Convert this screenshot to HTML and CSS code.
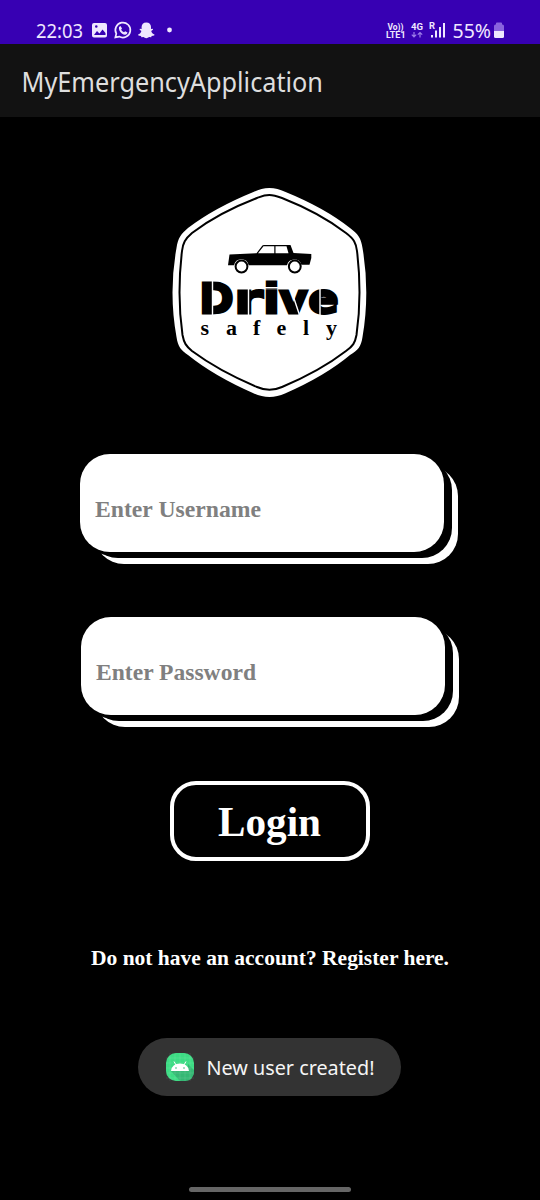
FILE: index.html
```html
<!DOCTYPE html>
<html lang="en">
<head>
<meta charset="utf-8">
<title>MyEmergencyApplication</title>
<link rel="stylesheet" href="styles.css">
</head>
<body>
<div class="screen">
  <header class="status">
    <div class="status-left">
      <svg width="140" height="24" viewBox="32 18 140 24">
        <g fill="#efe7ff">
          <text class="ui" x="36" y="37.5" font-size="20" textLength="47" lengthAdjust="spacingAndGlyphs">22:03</text>
          <path fill-rule="evenodd" d="M94 23H105Q107 23 107 25V35.500Q107 37.500 105 37.500H94Q92 37.500 92 35.500V25Q92 23 94 23ZM94 35L97 31L99.500 33.500L102.500 29.500L105.500 33V35ZM95 26.500a1.300 1.300 0 1 0 2.600 0a1.300 1.300 0 1 0-2.600 0Z"/>
          <path d="M146.300 22.400c3 0 4.700 2 4.700 4.600v2l1.700-.3.300 1-1.800 1.200c.5 1.800 1.600 2.900 3.300 3.500l-.3 1-2.600.6-.4 1.200-2.200-.1c-.9.700-1.600 1.100-2.700 1.100s-1.800-.4-2.700-1.100l-2.200.1-.4-1.200-2.600-.6-.3-1c1.700-.6 2.800-1.700 3.300-3.500l-1.800-1.200.3-1 1.700.3v-2c0-2.600 1.700-4.600 4.700-4.600Z"/>
          <circle cx="169.500" cy="30" r="2.400"/>
        </g>
        <path d="M115.400 37.300L116.300 33.700A7.500 7.500 0 1 1 119.200 36.600Z" fill="none" stroke="#efe7ff" stroke-width="1.700"/>
        <path d="M119 27l1.500-1 1.500 2.500-.9 1.200q1 1.900 2.900 2.600l1.200-1.100 2.300 1.300-.7 1.600q-2 1.400-5-.7-3.400-2.600-2.800-6.400Z" fill="#efe7ff"/>
      </svg>
    </div>
    <svg width="122" height="24" viewBox="384 18 122 24" fill="#efe7ff">
      <text class="tiny" x="387.500" y="29.500" font-size="9" textLength="16" lengthAdjust="spacingAndGlyphs">Vo))</text>
      <text class="tiny" x="386" y="38" font-size="9" textLength="19.500" lengthAdjust="spacingAndGlyphs">LTE1</text>
      <text class="tiny" x="411" y="29.500" font-size="9" textLength="12" lengthAdjust="spacingAndGlyphs">4G</text>
      <path d="M414 32V37M411.800 34.700L414 37L416.200 34.700M420 37.500V32.500M417.800 34.700L420 32.500L422.200 34.700" fill="none" stroke="#9c7ce8" stroke-width="1.200"/>
      <text class="tiny" x="429" y="29" font-size="9" textLength="6" lengthAdjust="spacingAndGlyphs">R</text>
      <path d="M431 35h2v2.500h-2zM435 30.500h2v7h-2zM439 27h2v10.500h-2zM443 23h2v14.500h-2z"/>
      <text class="ui" x="452.500" y="37.500" font-size="20" textLength="38.500" lengthAdjust="spacingAndGlyphs">55%</text>
      <path d="M494 31V26Q494 24.500 495.500 24.500H496V23Q496 22.500 497 22.500H501Q502 22.500 502 23V24.500H502.500Q504 24.500 504 26V31Z" fill="#8963de"/>
      <path d="M494 31H504V36.500Q504 38 502.500 38H495.500Q494 38 494 36.500Z"/>
    </svg>
  </header>
  <div class="appbar">
    <svg width="308" height="44" viewBox="19 60 308 44"><text class="ui" x="21.500" y="91.500" font-size="26.500" fill="#dedede" textLength="301.500" lengthAdjust="spacingAndGlyphs">MyEmergencyApplication</text></svg>
  </div>
  <main class="content">
    <svg class="logo" width="196" height="211" viewBox="171 187 196 211">
      <path fill="#fff" d="M269.300 188C275 188 280 189.500 285 191.700Q325 208 350 228C358 234 361 238 362.500 248Q366.300 270 366.300 292.500Q366.300 315 362.500 337C361 347 358 350 350 355Q325 376 285 393.500C275 398 264 398 254 393.500Q214 376 188 355C181 350 178 347 176.500 337Q172.500 315 172.500 292.500Q172.500 270 176.500 248C178 238 181 234 188 228Q214 208 254 191.700C259 189.500 264 188 269.300 188Z"/>
      <path fill="none" stroke="#000" stroke-width="2" d="M269.300 195C274 195 278 196.500 282 198Q320 213 346 233C354 239 356 243 357 251Q359.500 271 359.500 292.500Q359.500 314 356.500 335C355 343 353 346 346 351Q320 371 282 387C273 391 266 391 257 387Q219 371 192 351C186 346 184 343 182.500 335Q179.500 314 179.500 292.500Q179.500 271 182 251C183 243 185 239 192 233Q218 213 257 198C261 196.500 264 195 269.300 195Z"/>
      <path fill-rule="evenodd" d="M228 265.300L229.500 254.500L256.500 253.200L262 246Q262.500 245 264 245H290.500L293.500 253L311.300 254V258L309.500 264.800H301.500A7.500 7.500 0 0 0 287 265.300H248.700A7.500 7.500 0 0 0 234 265.300ZM258 253.200H274.300V246.300H263.500ZM275.500 253.200H288.500L286.500 246.300H275.500Z"/>
      <g fill="#fff" stroke="#000" stroke-width="2"><circle cx="241.500" cy="266.500" r="5.900"/><circle cx="294.800" cy="266.500" r="5.900"/></g>
      <text class="drive" y="312.500" font-size="40"><tspan x="199.500" textLength="34" lengthAdjust="spacingAndGlyphs">D</tspan><tspan x="234.500" textLength="28" lengthAdjust="spacingAndGlyphs">r</tspan><tspan x="263.500" textLength="16" lengthAdjust="spacingAndGlyphs">i</tspan><tspan x="279.500" textLength="28" lengthAdjust="spacingAndGlyphs">v</tspan><tspan x="308.500" textLength="30" lengthAdjust="spacingAndGlyphs">e</tspan></text>
      <path fill="none" stroke="#fff" stroke-width="1.400" d="M212.500 280V315M248.500 288V315M265 287.700H280M290.500 288L299.500 315M320 288V315"/>
      <text class="serif" y="334.500" font-size="22" x="200.500 226 253 276.500 303 326">safely</text>
    </svg>
    <div class="field username">
      <svg width="168" height="36" viewBox="94 490 168 36"><text class="serif" x="95" y="516.500" font-size="23.500" fill="#808080" textLength="166" lengthAdjust="spacingAndGlyphs">Enter Username</text></svg>
    </div>
    <div class="field password">
      <svg width="168" height="36" viewBox="94 490 168 36"><text class="serif" x="95" y="516.500" font-size="23.500" fill="#808080" textLength="160" lengthAdjust="spacingAndGlyphs">Enter Password</text></svg>
    </div>
    <div class="login">
      <svg width="110" height="60" viewBox="215 792 110 60"><text class="serif" x="218" y="837" font-size="42" fill="#fff" textLength="103" lengthAdjust="spacingAndGlyphs">Login</text></svg>
    </div>
    <div class="register">
      <svg width="360" height="36" viewBox="90 940 360 36"><text class="serif" x="91" y="965" font-size="21.500" fill="#fff" textLength="358" lengthAdjust="spacingAndGlyphs">Do not have an account? Register here.</text></svg>
    </div>
    <div class="toast">
      <svg width="28" height="28" viewBox="0 0 28 28">
        <rect width="28" height="28" rx="10" fill="#3ddc84"/>
        <path d="M5 18L14 28H18Q28 28 28 18V17L22 11V18Z" fill="#35b874"/>
        <path d="M4 0V28M9 0V28M14 0V28M19 0V28M24 0V28M0 5H28M0 10H28M0 15H28M0 20H28M0 25H28" stroke="#fff" stroke-opacity=".15" stroke-width=".6"/>
        <path d="M5 18Q6 10.500 14 10.500T23 18Z" fill="#fff"/>
        <path d="M8 8.500L10 12M20 8.500L18 12" stroke="#fff"/>
        <circle cx="10" cy="15" r=".8" fill="#35b874"/><circle cx="18" cy="15" r=".8" fill="#35b874"/>
      </svg>
      <svg width="174" height="38" viewBox="206 1050 174 38"><text class="ui" x="206.500" y="1077" font-size="20.500" fill="#f5f5f5" textLength="168" lengthAdjust="spacingAndGlyphs">New user created!</text></svg>
    </div>
    <div class="home"></div>
  </main>
</div>
</body>
</html>
```

FILE: styles.css
```css
* { box-sizing: border-box; }
body { margin: 0; background: #000; }
svg { display: block; flex: none; overflow: visible; }
.screen { width: 540px; height: 1200px; display: flex; flex-direction: column; overflow: hidden; background: #000; }
.status { height: 44px; padding: 18px 34px 0 32px; display: flex; justify-content: space-between; background: #3700b3; }
.appbar { height: 73px; padding: 16px 19px; background: #121212; }
.content { flex: 1; display: flex; flex-direction: column; align-items: center; padding-top: 70px; }
.logo { margin-right: 2px; }
.ui { font-family: "Noto Sans", sans-serif; }
.tiny { font-family: Roboto, sans-serif; font-weight: 700; }
.serif { font-family: "Liberation Serif", serif; font-weight: 700; }
.drive { font-family: "DejaVu Sans", sans-serif; font-weight: 700; stroke: #000; stroke-width: 2.8px; }
/* White card over a black gap and a white offset edge */
.field {
  width: 364px; height: 98px; padding: 36px 14px; border-radius: 30px; background: #fff;
  box-shadow: 0 0 0 3px #000, 8px 6px 0 #000, 14px 12px 0 #fff;
}
.username { margin: 56px 16px 0 0; }
.password { margin: 65px 14px 0 0; }
.login {
  width: 200px; height: 80px; margin-top: 66px; margin-right: 1px;
  display: flex; align-items: center; justify-content: center;
  border: 4px solid #fff; border-radius: 26px;
}
.register { margin-top: 79px; }
.toast {
  width: 263px; height: 58px; margin: 62px 1px 0 0; padding-left: 28px;
  display: flex; align-items: center; gap: 12px; border-radius: 29px; background: #333;
}
.home { width: 162px; height: 5px; margin-top: 91px; border-radius: 3px; background: #666; }
```
